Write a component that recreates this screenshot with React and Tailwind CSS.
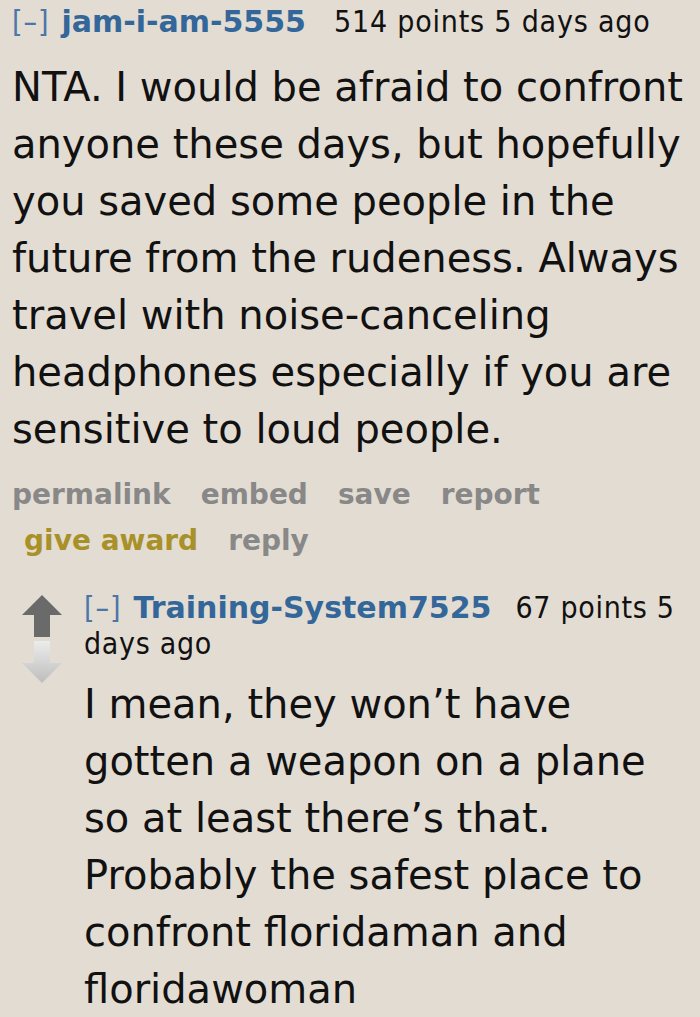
import React from "react";

const verdana = "font-['DejaVu_Sans',Verdana,sans-serif]";
const tahoma = "font-['DejaVu_Sans_Condensed','DejaVu_Sans',Tahoma,sans-serif]";

function Arrows() {
  return (
    <div className="flex flex-col items-center w-[44px] pt-[6px] gap-[4px]">
      <svg width="40" height="42" viewBox="0 0 40 42">
        <path d="M20 0 L40 20 L28 20 L28 42 L12 42 L12 20 L0 20 Z" fill="#6a6a6a" />
      </svg>
      <svg width="40" height="42" viewBox="0 0 40 42">
        <defs>
          <linearGradient id="dn" x1="0" y1="0" x2="0" y2="1">
            <stop offset="0" stopColor="#ececec" />
            <stop offset="1" stopColor="#bdbdbd" />
          </linearGradient>
        </defs>
        <path d="M12 0 L28 0 L28 22 L40 22 L20 42 L0 22 L12 22 Z" fill="url(#dn)" />
      </svg>
    </div>
  );
}

export default function App() {
  return (
    <div className="w-[700px] h-[1017px] overflow-hidden bg-[#e3dcd2] text-[#111]">
      <div className="pl-[12px] pt-[4px]">
        <div className="flex items-baseline text-[30px] leading-[36px] whitespace-nowrap">
          <span className={`${tahoma} text-[#4a76a8] tracking-[1px]`}>[–]</span>
          <span className={`${verdana} font-bold text-[#336699] ml-[12px]`}>jam-i-am-5555</span>
          <span className={`${tahoma} ml-[28px] tracking-[0.8px]`}>514 points 5 days ago</span>
        </div>

        <p className={`${verdana} text-[40px] leading-[57px] mt-[19px] whitespace-nowrap`}>
          NTA. I would be afraid to confront<br />
          anyone these days, but hopefully<br />
          you saved some people in the<br />
          future from the rudeness. Always<br />
          travel with noise-canceling<br />
          headphones especially if you are<br />
          sensitive to loud people.
        </p>

        <div className={`${verdana} font-bold text-[28px] leading-[46px] text-[#888] mt-[14px] whitespace-nowrap`}>
          <div className="flex gap-[30px]">
            <span>permalink</span>
            <span>embed</span>
            <span>save</span>
            <span>report</span>
          </div>
          <div className="flex gap-[30px] pl-[12px]">
            <span className="text-[#a89128]">give award</span>
            <span>reply</span>
          </div>
        </div>

        <div className="flex mt-[25px] ml-[8px]">
          <Arrows />
          <div className="ml-[20px] flex-1">
            <div className="text-[30px] leading-[35px] whitespace-nowrap">
              <span className={`${tahoma} text-[#4a76a8] tracking-[1px]`}>[–]</span>
              <span className={`${verdana} font-bold text-[#336699] ml-[12px]`}>Training-System7525</span>
              <span className={`${tahoma} ml-[24px] tracking-[0.7px]`}>67 points 5</span>
              <br />
              <span className={`${tahoma} tracking-[0.7px]`}>days ago</span>
            </div>
            <p className={`${verdana} text-[40px] leading-[57px] mt-[15px] whitespace-nowrap`}>
              I mean, they won’t have<br />
              gotten a weapon on a plane<br />
              so at least there’s that.<br />
              Probably the safest place to<br />
              confront floridaman and<br />
              floridawoman
            </p>
          </div>
        </div>
      </div>
    </div>
  );
}
